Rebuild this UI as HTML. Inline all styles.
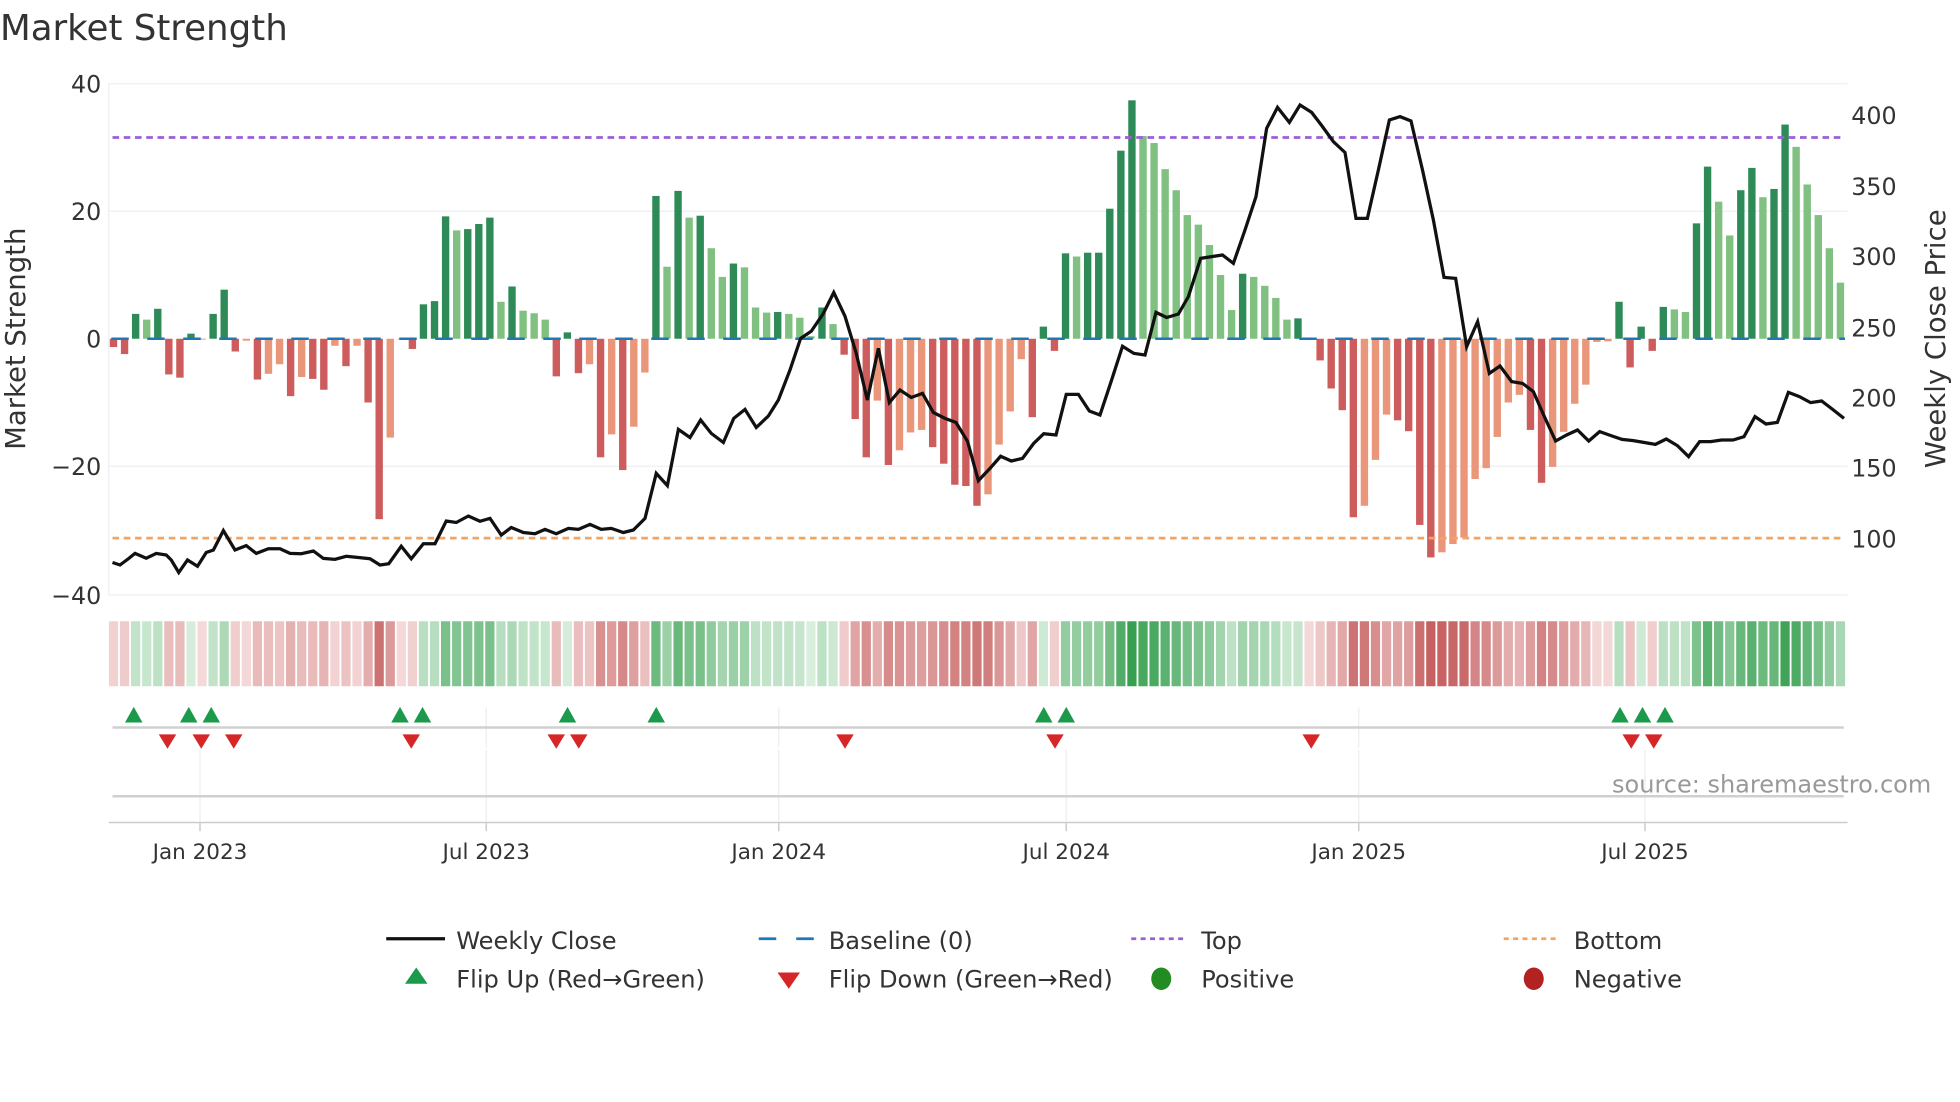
<!DOCTYPE html>
<html><head><meta charset="utf-8">
<style>
html,body{margin:0;padding:0;background:#fff;}
svg{display:block;}
text{font-family:"DejaVu Sans","Liberation Sans",sans-serif;fill:#333;}
</style></head>
<body>
<svg id="s" width="1960" height="1102" viewBox="0 0 1568 881.6" xmlns="http://www.w3.org/2000/svg">
<rect width="1568" height="882" fill="#fff"/>
<text x="0" y="32" font-size="28.5">Market Strength</text>
<g stroke="#eceff4" stroke-width="1">
<line x1="87" y1="67" x2="1478" y2="67"/>
<line x1="87" y1="169" x2="1478" y2="169"/>
<line x1="87" y1="373" x2="1478" y2="373"/>
<line x1="87" y1="476" x2="1478" y2="476"/>
<line x1="87" y1="67" x2="87" y2="476"/>
</g>
<g font-size="19" text-anchor="end">
<text x="81" y="74">40</text>
<text x="81" y="176">20</text>
<text x="81" y="278">0</text>
<text x="81" y="380">−20</text>
<text x="81" y="483">−40</text>
</g>
<g font-size="19">
<text x="1481" y="99">400</text>
<text x="1481" y="156">350</text>
<text x="1481" y="212">300</text>
<text x="1481" y="269">250</text>
<text x="1481" y="325">200</text>
<text x="1481" y="381">150</text>
<text x="1481" y="438">100</text>
</g>
<text font-size="22" text-anchor="middle" transform="translate(20,271) rotate(-90)">Market Strength</text>
<text font-size="22" text-anchor="middle" transform="translate(1556,271) rotate(-90)">Weekly Close Price</text>
<g id="bars"></g>
<line x1="89" y1="271" x2="1476" y2="271" stroke="#1f77b4" stroke-width="2" stroke-dasharray="14 14.8"/>
<line x1="90" y1="110" x2="1476" y2="110" stroke="#9b5fd6" stroke-width="2.2" stroke-dasharray="5.3 3.7"/>
<line x1="90" y1="430.5" x2="1476" y2="430.5" stroke="#f4a460" stroke-width="2.2" stroke-dasharray="5.3 3.7"/>
<path id="price" fill="none" stroke="#111" stroke-width="2.6" stroke-linejoin="miter"/>
<g id="strip"></g>
<g stroke="#eee" stroke-width="1">
<line x1="389" y1="566" x2="389" y2="598"/>
<line x1="623" y1="566" x2="623" y2="598"/>
<line x1="1087" y1="566" x2="1087" y2="598"/>
<line x1="160" y1="600" x2="160" y2="658"/>
<line x1="389" y1="600" x2="389" y2="658"/>
<line x1="623" y1="600" x2="623" y2="658"/>
<line x1="853" y1="600" x2="853" y2="658"/>
<line x1="1087" y1="600" x2="1087" y2="658"/>
<line x1="1316" y1="600" x2="1316" y2="658"/>
</g>
<line x1="90" y1="582" x2="1475" y2="582" stroke="#d0d0d0" stroke-width="2"/>
<g id="tri"></g>
<line x1="90" y1="637" x2="1475" y2="637" stroke="#d0d0d0" stroke-width="2"/>
<line x1="87" y1="658" x2="1478" y2="658" stroke="#ccc" stroke-width="1.2"/>
<g stroke="#ccc" stroke-width="1.2">
<line x1="160" y1="658" x2="160" y2="665"/><line x1="389" y1="658" x2="389" y2="665"/>
<line x1="623" y1="658" x2="623" y2="665"/><line x1="853" y1="658" x2="853" y2="665"/>
<line x1="1087" y1="658" x2="1087" y2="665"/><line x1="1316" y1="658" x2="1316" y2="665"/>
</g>
<text x="1545" y="634" font-size="19.2" text-anchor="end" style="fill:#999">source: sharemaestro.com</text>
<g font-size="17.2" text-anchor="middle">
<text x="160" y="687">Jan 2023</text>
<text x="389" y="687">Jul 2023</text>
<text x="623" y="687">Jan 2024</text>
<text x="853" y="687">Jul 2024</text>
<text x="1087" y="687">Jan 2025</text>
<text x="1316" y="687">Jul 2025</text>
</g>
<line x1="309" y1="751" x2="356" y2="751" stroke="#111" stroke-width="2.6"/>
<line x1="607" y1="751" x2="651" y2="751" stroke="#1f77b4" stroke-width="2.2" stroke-dasharray="14 16"/>
<line x1="905" y1="751" x2="947" y2="751" stroke="#9b5fd6" stroke-width="2.2" stroke-dasharray="4 3.5"/>
<line x1="1203" y1="751" x2="1247" y2="751" stroke="#f4a460" stroke-width="2.2" stroke-dasharray="4 3.5"/>
<polygon points="333,774 342,787 324,787" fill="#1a9a4a"/>
<polygon points="622,778 640,778 631,791" fill="#d62728"/>
<ellipse cx="929" cy="783" rx="8" ry="9" fill="#228b22"/>
<ellipse cx="1227" cy="783" rx="8" ry="9" fill="#b22222"/>
<g font-size="19.3">
<text x="365" y="759">Weekly Close</text>
<text x="663" y="759">Baseline (0)</text>
<text x="961" y="759">Top</text>
<text x="1259" y="759">Bottom</text>
<text x="365" y="790">Flip Up (Red→Green)</text>
<text x="663" y="790">Flip Down (Green→Red)</text>
<text x="961" y="790">Positive</text>
<text x="1259" y="790">Negative</text>
</g>
</svg>
<script>
var d="-1.3R -2.4R 3.9D 3L 4.7D -5.6R -6.1R 0.8D -0.1R 3.9D 7.7D -2R -0.3O -6.4R -5.5O -4O -9R -6O -6.3R -8R -1.1O -4.3R -1.1O -10R -28.3R -15.5O -0.1O -1.6R 5.4D 5.9D 19.2D 17L 17.2D 18D 19D 5.8L 8.2D 4.4L 4L 3L -5.9R 1D -5.4R -4O -18.6R -15O -20.6R -13.8O -5.3O 22.4D 11.3L 23.2D 19L 19.3D 14.2L 9.7L 11.8D 11.2L 4.9L 4.1L 4.2D 3.9L 3.3L 0.4L 4.9D 2.3L -2.5R -12.6R -18.6R -9.7O -19.8R -17.5O -14.7O -14.3O -17R -19.6R -22.9R -23.1R -26.2R -24.4O -16.6O -11.4O -3.2O -12.3R 1.9D -1.9R 13.4D 12.9L 13.5D 13.5D 20.4D 29.5D 37.4D 31.8L 30.7L 26.6L 23.3L 19.4L 17.9L 14.7L 10L 4.5L 10.2D 9.7L 8.3L 6.4L 3L 3.2D -0.2O -3.4R -7.8R -11.2R -28R -26.2O -19O -11.9O -12.8R -14.5R -29.2R -34.3R -33.5O -32.2O -31.2O -22O -20.3O -15.4O -10O -8.8O -14.3R -22.6R -20.1O -14.6O -10.2O -7.2O -0.5O -0.4O 5.8D -4.5R 1.9D -1.9R 5D 4.6L 4.2L 18.1D 27D 21.5L 16.2L 23.3D 26.8D 22.2L 23.5D 33.6D 30.1L 24.2L 19.4L 14.2L 8.8L".split(" ");
var C={D:"#2e8b57",L:"#80c080",R:"#cd5c5c",O:"#e9967a"};
var b="",s="";
function mix(a,c,t){return "rgb("+a.map(function(v,k){return Math.round(v+(c[k]-v)*t)}).join(",")+")";}
d.forEach(function(e,i){
 var v=parseFloat(e),t=e.slice(-1),x=90.8+i*8.856,h=Math.abs(v)*5.1,y=v>0?271-h:271;
 if(h>0.3)b+='<rect x="'+(x-2.95).toFixed(2)+'" y="'+y.toFixed(2)+'" width="5.9" height="'+h.toFixed(2)+'" fill="'+C[t]+'"/>';
 var tt=Math.min(Math.abs(v)/36,1),col=v>=0?mix([222,241,226],[55,160,80],Math.pow(tt,0.8)):mix([245,218,218],[196,92,92],Math.pow(tt,0.8));
 s+='<rect x="'+(x-3.7).toFixed(2)+'" y="497" width="7.4" height="52" fill="'+col+'"/>';
});
document.getElementById("bars").innerHTML=b;
document.getElementById("strip").innerHTML=s;
var p=[[90,450],[96,452],[102.7,447],[108,442.7],[117,446.6],[125,442.7],[133,444],[137,448],[143,458],[150,448],[158,453],[165,442],[170.7,440],[178.7,424.5],[188,440],[197,436.5],[205,442.7],[214.7,439],[224,439],[232,442.7],[241,443],[250.7,440.8],[258.7,446.7],[268,447.5],[277,445],[286.7,446],[296,447],[304,452],[311,451],[321,437],[329,447],[338.7,435],[348,435],[357,416.8],[365,418],[374.7,412.8],[384,417],[392,414.7],[401,428],[409,422],[418.7,426],[428,427],[436,423.5],[445,427],[454.7,422.7],[462.7,423.5],[472,419.5],[481,423.5],[489,422.7],[498.7,426],[506.7,424],[516,414.7],[525,378.7],[533.9,388.5],[542.7,343.5],[552,350],[560.5,336],[569,346.7],[578.7,354],[587,334.7],[596,327.5],[605,342],[614.7,332.8],[622.7,320],[632,296],[640.5,270.7],[649,265],[658.7,250.7],[667,234],[676,253],[685,282.7],[693.9,320],[702.7,278.7],[711.5,322],[720,312],[729,318],[738,314.7],[746.7,330],[756,334.7],[764.8,338],[774,353],[782.7,384.5],[792,374.7],[800.5,365],[809,368.8],[818,366.7],[827,354.7],[835,347],[844.8,348],[853,315.5],[862.7,315.5],[871.5,328.8],[880,332],[889.3,304],[898,277],[907,282.7],[916,284],[924.8,249.9],[933.3,254],[942.7,251.2],[950.7,237.3],[960.5,206.7],[969.3,205.3],[978,204],[986.7,210.7],[996,184],[1004.8,157.3],[1013.3,102.7],[1022,85.9],[1031.5,97.9],[1040,84],[1049.3,89.9],[1058,101.3],[1066.7,113.3],[1076,122],[1084.8,174.7],[1093.9,174.7],[1102.7,136],[1111.5,96],[1120,93.3],[1128.8,96.8],[1138,136],[1146.7,176],[1155.2,221.9],[1164.5,222.7],[1173.3,277.3],[1182.1,257.3],[1191.5,298.7],[1200,292.8],[1209.3,305.3],[1218,306.7],[1226.7,313.3],[1235.5,333.3],[1244.5,352.8],[1253.3,348],[1262,344],[1271,352.8],[1279.7,345.3],[1288.8,348.5],[1297.6,351.5],[1306.7,352.5],[1315.5,354],[1324.3,355.5],[1333,351.2],[1341.9,356.5],[1350.9,365.3],[1359.7,353.3],[1368.5,353.3],[1377.3,352],[1386.4,352],[1395.2,349.3],[1404,333.3],[1412.8,339.2],[1421.9,337.9],[1430.7,313.9],[1439.5,317.3],[1448.5,322.1],[1457.3,320.8],[1466.1,327.5],[1475.2,334.7]];
document.getElementById("price").setAttribute("d","M"+p.map(function(q){return q[0]+","+q[1]}).join(" L"));
var up=[107,151,169,320,338,454,525,835,853,1296,1314,1332],dn=[134,161,187,329,445,463,676,844,1049,1305,1323],t="";
up.forEach(function(x){t+='<polygon points="'+x+',565.5 '+(x+7)+',578 '+(x-7)+',578" fill="#1a9a4a"/>';});
dn.forEach(function(x){t+='<polygon points="'+(x-7)+',587.5 '+(x+7)+',587.5 '+x+',599" fill="#d62728"/>';});
document.getElementById("tri").innerHTML=t;
</script>
</body></html>
